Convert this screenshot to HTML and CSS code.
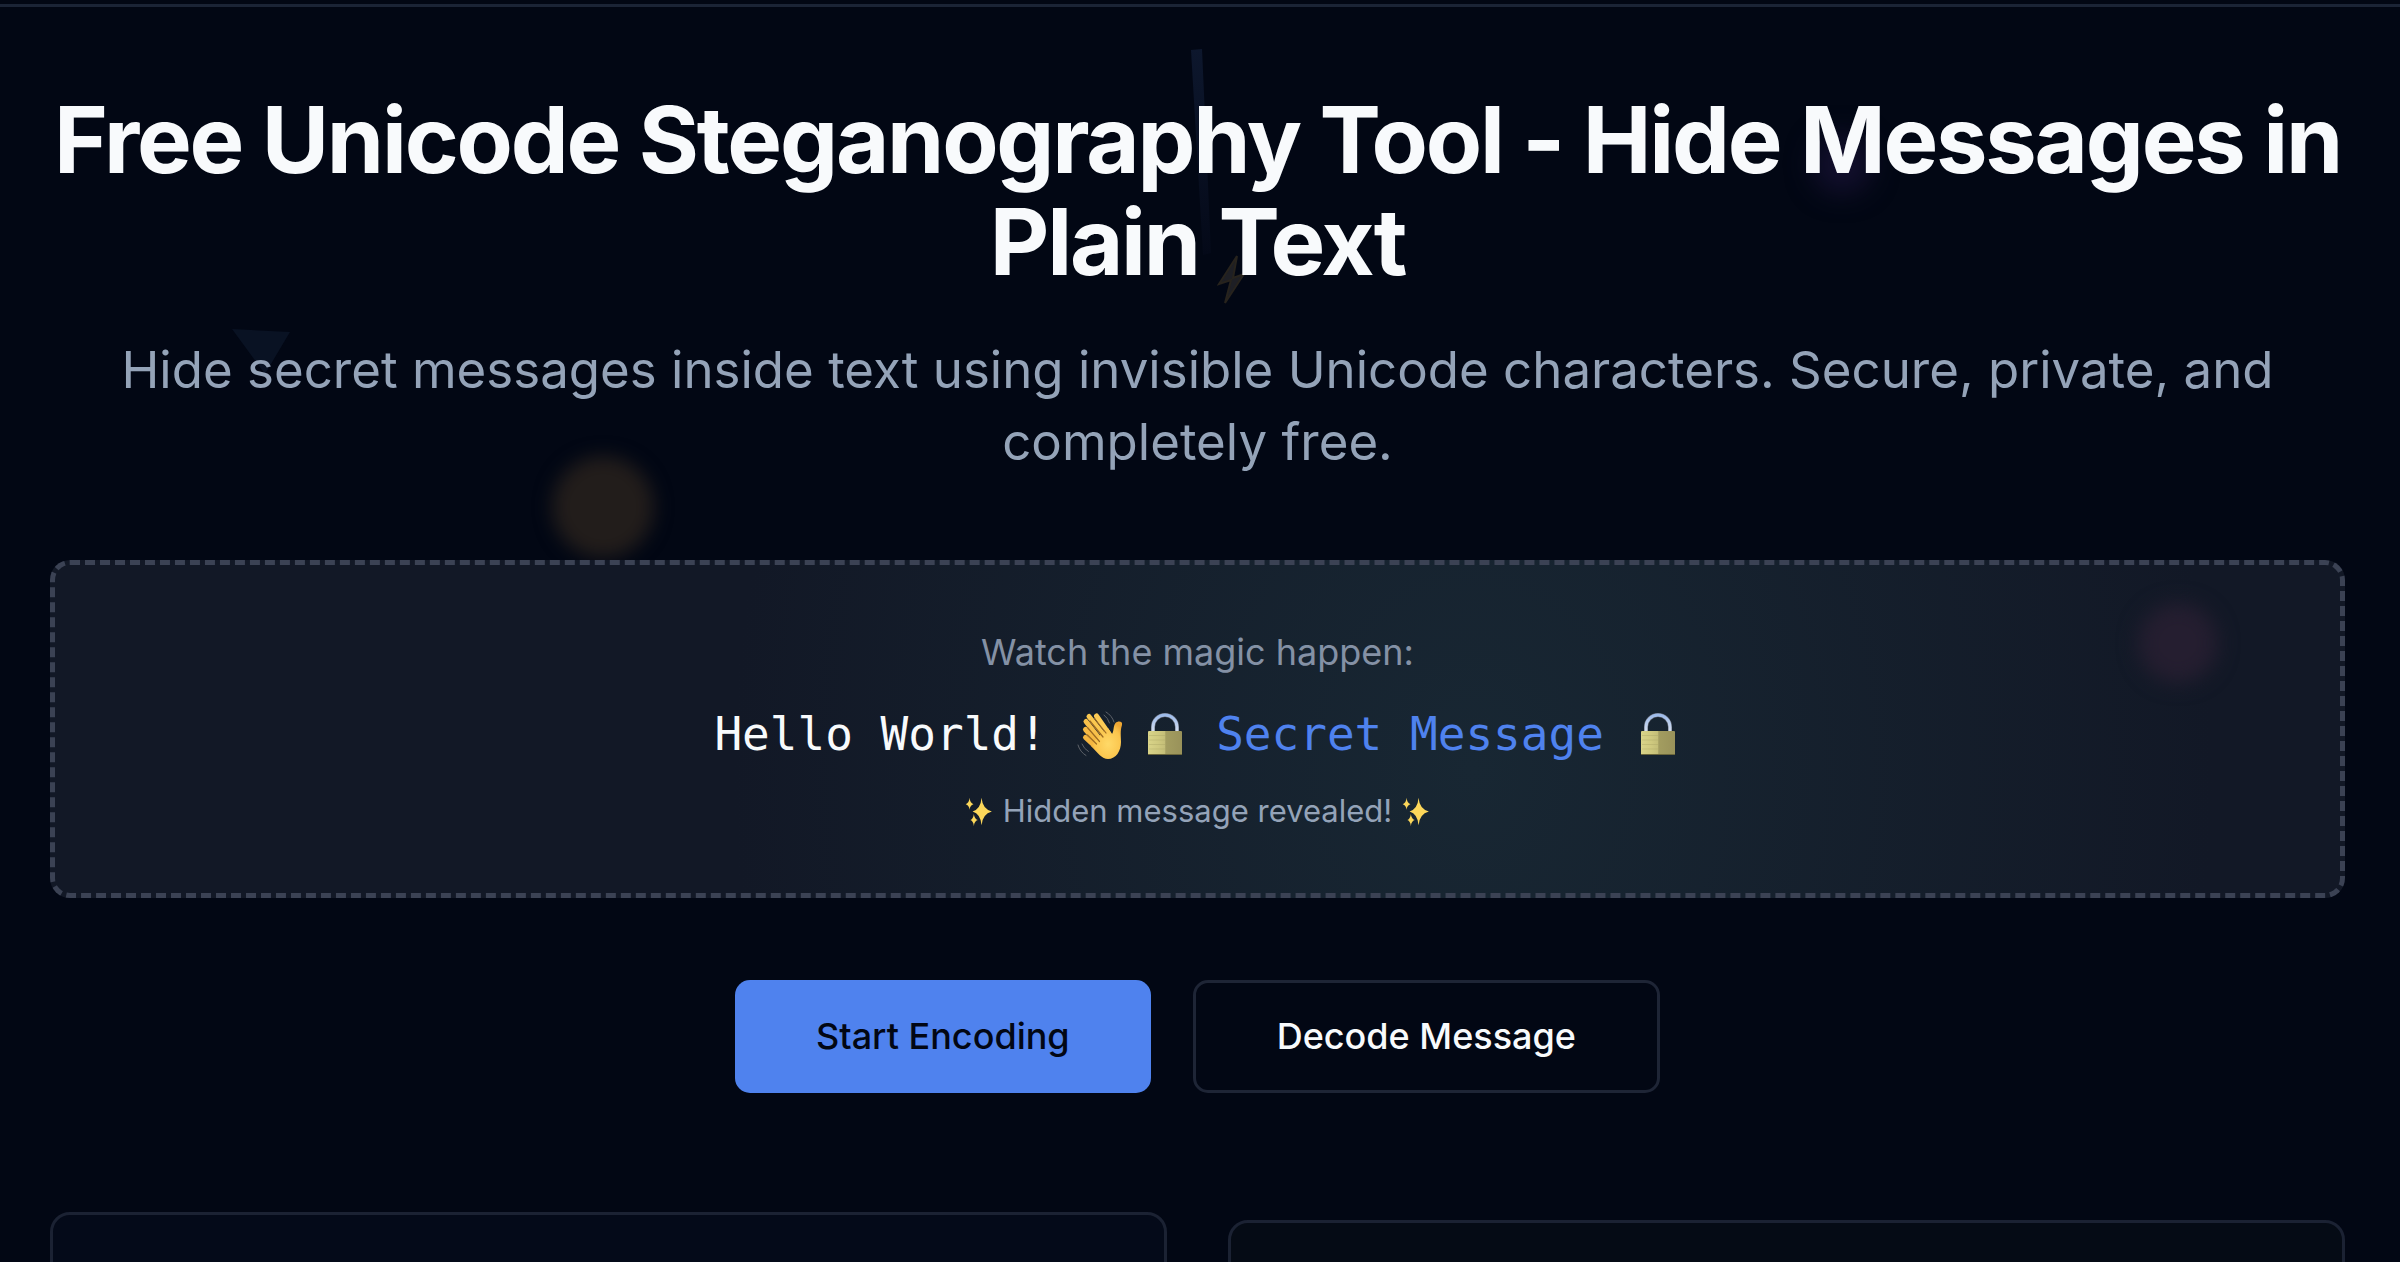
FILE: index.html
```
<!DOCTYPE html>
<html lang="en">
<head>
<meta charset="utf-8">
<title>Free Unicode Steganography Tool</title>
<link rel="stylesheet" href="styles.css">
</head>
<body>
<svg class="defs" aria-hidden="true">
  <defs>
    <linearGradient id="brass" x1="0" x2="1" y1="0" y2="0">
      <stop offset="0" stop-color="#d9d489"/><stop offset=".3" stop-color="#cfc97f"/><stop offset=".5" stop-color="#c4be78"/><stop offset=".52" stop-color="#a39d60"/><stop offset="1" stop-color="#99925a"/>
    </linearGradient>
    <linearGradient id="steel" x1="0" x2="0" y1="0" y2="1">
      <stop offset="0" stop-color="#9dbbea"/><stop offset="1" stop-color="#e3e8f1"/>
    </linearGradient>
    <radialGradient id="skin" cx=".55" cy=".6" r=".6">
      <stop offset="0" stop-color="#ffd968"/><stop offset=".7" stop-color="#fbc54d"/><stop offset="1" stop-color="#eda633"/>
    </radialGradient>
    <symbol id="lock" viewBox="-1 0 49 49">
      <path d="M13 25V16A12 12 0 0 1 37 16V25" fill="none" stroke="#6a6f7b" stroke-width="4"/>
      <path d="M13 25V16A12 12 0 0 1 37 16V25" fill="none" stroke="url(#steel)" stroke-width="3"/>
      <rect x="8" y="20" width="34" height="24" rx="1" fill="url(#brass)"/>
      <path d="M9 24.500H25M9 29H25M9 33.500H25M9 38H25" stroke="#aaa565" stroke-width="1" opacity=".4"/>
      <path d="M8 43.500H42" stroke="#6b663b" stroke-width="1"/>
    </symbol>
    <symbol id="wave" viewBox="-2 0 49 49">
      <g stroke="url(#skin)" stroke-linecap="round" fill="none" stroke-width="5">
        <path d="M9.500 18.500L23 34" stroke="#f5b943"/>
        <path d="M10 10.500L26 31" stroke="#f8c04a"/>
        <path d="M13 5.500L30 27" stroke="#fac850"/>
        <path d="M20.500 5L33 23" stroke="#fccb55"/>
        <path d="M9.500 26.500L23 39" stroke="#f3b540"/>
      </g>
      <path d="M17 31L32 17L36 23C38 21 37 15 39.500 12C42 9.500 47 10 46 14C44 20 45 25 45 31C45 40 40 48 32 48C26 48 22 42 15 35Z" fill="url(#skin)"/>
      <path d="M11.500 16.500L23.500 30.500M14 10L27 26M18.500 7.500L30 22M11.500 24L20.500 33" stroke="#9c6a22" stroke-width="1.200" fill="none" stroke-linecap="round"/>
      <path d="M28 4Q32 7 33.500 12M30 1Q36 4.500 38 11M6 33Q8 38 12.500 40.500M2 34Q4 41 10 44.500" stroke="#5d6269" stroke-width="1" fill="none" stroke-linecap="round"/>
    </symbol>
    <symbol id="sparkles" viewBox="-1 -1 35 35">
      <g fill="#fcd75a">
        <path d="M19.500 1Q20.500 14 31.500 17Q20.500 20 19.500 33Q18.500 20 9 17Q18.500 14 19.500 1Z"/>
        <path d="M5.500 1Q6 7 10 8.500Q6 10 5.500 15Q5 10 1 8.500Q5 7 5.500 1Z"/>
        <path d="M10.500 20Q11 25.500 15 27Q11 28.500 10.500 34Q10 28.500 6.500 27Q10 25.500 10.500 20Z"/>
      </g>
    </symbol>
  </defs>
</svg>

<div class="backdrop" aria-hidden="true">
  <span class="orb orb-amber"></span>
  <span class="orb orb-violet"></span>
  <svg class="beam" viewBox="0 0 24 210"><defs><linearGradient id="beam" x1="0" x2="0" y1="0" y2="1"><stop offset="0" stop-color="#0d172d"/><stop offset="1" stop-color="#040918"/></linearGradient></defs><path d="M0 1L11 0L20 204L12 206Z" fill="url(#beam)"/></svg>
  <svg class="triangle" viewBox="0 0 60 46"><path d="M0 0L58 3L33 45Z" fill="#091223"/></svg>
  <svg class="bolt" viewBox="0 0 30 52"><path d="M20 2L2 30L14 26L8 49L27 20L16 24Z" fill="#1e1f25" stroke="#27231d" stroke-width="2"/></svg>
</div>

<header class="topbar"></header>

<main class="page">
  <section class="hero">
    <h1>Free Unicode Steganography Tool - Hide Messages in Plain Text</h1>
    <p class="lead">Hide secret messages inside text using invisible Unicode characters. Secure, private, and completely free.</p>
  </section>

  <section class="demo">
    <p class="demo-label">Watch the magic happen:</p>
    <p class="demo-text"><span>Hello World! <svg class="emoji" role="img" aria-label="waving hand"><use href="#wave"/></svg></span><span class="secret"><svg class="emoji" role="img" aria-label="lock"><use href="#lock"/></svg> Secret Message <svg class="emoji" role="img" aria-label="lock"><use href="#lock"/></svg></span></p>
    <p class="demo-note"><svg class="emoji-small" role="img" aria-label="sparkles"><use href="#sparkles"/></svg> Hidden message revealed! <svg class="emoji-small" role="img" aria-label="sparkles"><use href="#sparkles"/></svg></p>
    <span class="orb orb-rose"></span>
  </section>

  <div class="actions">
    <button class="btn btn-primary" type="button">Start Encoding</button>
    <button class="btn btn-outline" type="button">Decode Message</button>
  </div>

  <section class="cards">
    <article class="card card-encode"></article>
    <article class="card card-decode"></article>
  </section>
</main>
</body>
</html>
```
FILE: styles.css
```
* { box-sizing: border-box; }

html { background: #020714; }

body {
  margin: 0;
  position: relative;
  min-height: 100vh;
  color: #f8fafc;
  font-family: Inter, "Liberation Sans", sans-serif;
}

h1, p { margin: 0; }

.defs { position: absolute; width: 0; height: 0; }

.topbar {
  height: 7px;
  border-bottom: 3px solid #1b2436;
}

/* Faint decorations floating behind the content */
.backdrop {
  position: absolute;
  inset: 0;
  z-index: -1;
}

.orb { position: absolute; border-radius: 50%; }
.orb-amber { left: 552px; top: 456px; width: 102px; height: 102px; background: #221d1b; filter: blur(9px); }
.orb-violet { left: 1812px; top: 134px; width: 60px; height: 60px; background: #120f2c; filter: blur(13px); }
.orb-rose { right: 122px; top: 38px; width: 80px; height: 80px; background: #251e30; filter: blur(10px); }
.beam { position: absolute; left: 1191px; top: 49px; width: 24px; height: 210px; }
.triangle { position: absolute; left: 232px; top: 329px; width: 60px; height: 46px; }
.bolt { position: absolute; left: 1217px; top: 254px; width: 30px; height: 52px; }

.page { padding: 82px 55px 0 50px; }

.hero { text-align: center; }

.hero h1 {
  font-size: 92px;
  line-height: 102px;
  font-weight: 700;
  letter-spacing: -0.024em;
}

.lead {
  margin-top: 41px;
  font-size: 51px;
  line-height: 72px;
  color: #94a3b8;
}

.demo {
  position: relative;
  margin-top: 82px;
  padding: 62px 61px;
  border: 5px dashed #3b4254;
  border-radius: 20px;
  background: radial-gradient(ellipse 740px 900px at 62% 62%, #182733, #121826) border-box;
  text-align: center;
}

.demo-label {
  font-size: 36px;
  line-height: 51px;
  color: #8491a5;
}

.demo-text {
  margin-top: 20px;
  font-family: "DejaVu Sans Mono", monospace;
  font-size: 46px;
  line-height: 72px;
}

.secret { margin-left: 16px; color: #4f82ee; }

.emoji { width: 49px; height: 49px; vertical-align: -10px; }
.emoji-small { width: 30px; height: 30px; vertical-align: -4px; }

.demo-note {
  margin-top: 20px;
  font-size: 31px;
  line-height: 41px;
  color: #94a3b8;
}

.actions {
  display: flex;
  justify-content: center;
  gap: 42px;
  margin-top: 82px;
}

.btn {
  height: 113px;
  padding: 0 81px;
  border: 0;
  border-radius: 15px;
  font: 500 36px/51px Inter, "Liberation Sans", sans-serif;
}

.btn-primary { background: #4f82ee; color: #020714; }
.btn-outline { border: 3px solid #1e2536; background: #020714; color: #f8fafc; }

.cards {
  display: grid;
  grid-template-columns: 1fr 1fr;
  gap: 61px;
  margin-top: 119px;
}

.card {
  min-height: 400px;
  border: 3px solid #1b2233;
  border-radius: 20px;
}

.card-encode { background: #040a19; }
.card-decode { margin-top: 8px; background: #050b15; }
```
